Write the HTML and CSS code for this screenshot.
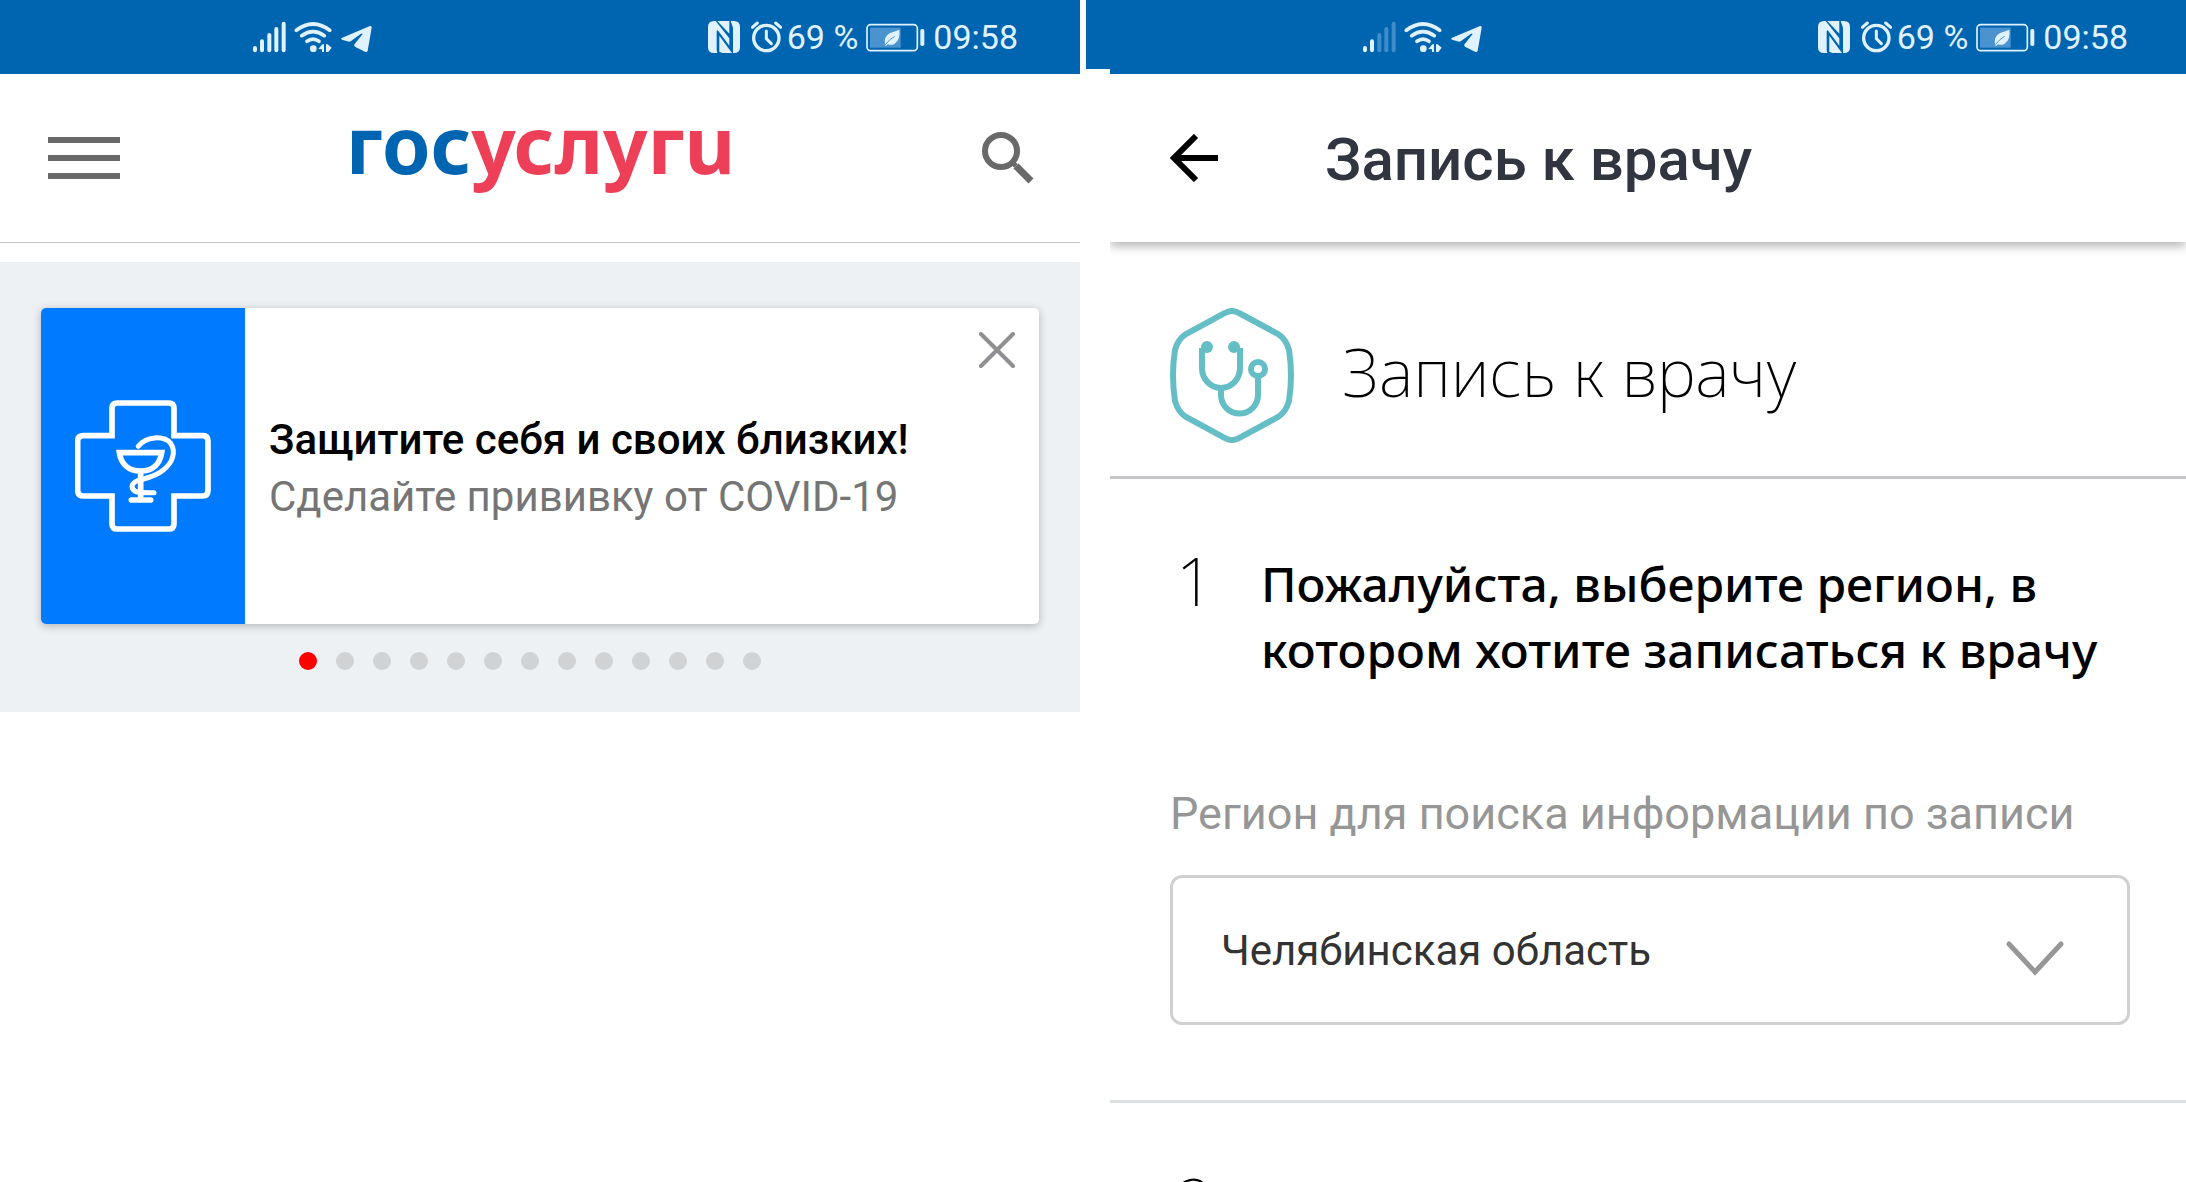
FILE: index.html
```html
<!DOCTYPE html>
<html lang="ru">
<head>
    <meta charset="UTF-8">
    <meta name="viewport" content="width=device-width, initial-scale=1.0">
    <title>Госуслуги - Запись к врачу</title>
    <link rel="stylesheet" href="styles.css">
</head>
<body>
    <!-- shared status bar icons -->
    <svg class="sprite" aria-hidden="true">
        <symbol id="wifi" viewBox="191 60 117 96">
            <g fill="none" stroke="currentColor" stroke-width="11" stroke-linecap="round">
                <path d="M198 88 Q248 50 298 88"/>
                <path d="M214 104 Q248 80 282 104"/>
                <path d="M230 121 Q248 108 266 121"/>
            </g>
            <circle cx="249" cy="143" r="10" fill="currentColor"/>
            <path d="M264 144 L276 130 H281 V153 H275 V145 Z M287 130 H292 L304 140 L294 153 H287 Z" fill="currentColor"/>
        </symbol>
        <symbol id="plane" viewBox="330 60 99 96">
            <path d="M335 111 L420 75 Q426 74 425 80 L413 149 Q411 155 405 152 L375 137 Q370 134 374 129 L398 99 Q396 96 392 99 L362 121 Q357 123 352 121 L336 116 Q331 113 335 111 Z" fill="currentColor"/>
        </symbol>
        <symbol id="nfc" viewBox="54 60 96 96">
            <path d="M72 60 H77 L118 112 V134 L85 90 Q80 84 80 92 V148 L82 156 H72 Q54 156 54 138 V78 Q54 60 72 60 Z" fill="currentColor"/>
            <path d="M88 104 V152 L98 156 H126 Z" fill="currentColor"/>
            <path d="M82 60 H118 V98 Z" fill="currentColor"/>
            <path d="M122 60 H132 Q150 60 150 78 V138 Q150 156 132 156 H129 V80 Z" fill="currentColor"/>
        </symbol>
        <symbol id="alarm" viewBox="182 60 93 96">
            <circle cx="228" cy="111" r="38" fill="none" stroke="currentColor" stroke-width="10"/>
            <path d="M228 90 V113 L243 128 M186 79 L201 66 M271 79 L256 66" fill="none" stroke="currentColor" stroke-width="9" stroke-linecap="round"/>
        </symbol>
        <symbol id="battery" viewBox="530 60 177 96">
            <rect x="533" y="71" width="151" height="78" rx="11" fill="none" stroke="currentColor" stroke-width="5"/>
            <rect x="542" y="80" width="92" height="60" fill="#4b93cf"/>
            <rect x="693" y="84" width="12" height="51" rx="5" fill="currentColor"/>
            <path d="M587 132 Q583 105 602 96 Q616 92 630 86 Q634 116 616 128 Q606 134 596 130 L590 135 Z" fill="currentColor"/>
            <path d="M588 131 Q602 113 616 106" fill="none" stroke="#4b93cf" stroke-width="3"/>
        </symbol>
    </svg>

    <div class="page">
        <section class="screen">
            <div class="status-bar">
                <svg class="signal" viewBox="65 60 105 96">
                    <path d="M74 141 V148 M95 121 V148 M117 102 V148 M138 84 V148 M160 68 V148"/>
                </svg>
                <svg class="wifi"><use href="#wifi"/></svg>
                <svg class="plane"><use href="#plane"/></svg>
                <div class="status-right">
                    <svg class="nfc"><use href="#nfc"/></svg>
                    <svg class="alarm"><use href="#alarm"/></svg>
                    <span>69 %</span>
                    <svg class="battery"><use href="#battery"/></svg>
                    <span>09:58</span>
                </div>
            </div>

            <header class="main-header">
                <button class="icon-button" aria-label="Меню">
                    <svg width="72" height="42" viewBox="0 0 72 42">
                        <path d="M0 3 H72 M0 21 H72 M0 39 H72" stroke="#696969" stroke-width="6"/>
                    </svg>
                </button>
                <!-- the wordmark ends with a u-shaped letter -->
                <a class="logo" href="#" aria-label="госуслуги"><span class="logo-blue">гос</span>услугu</a>
                <button class="icon-button" aria-label="Поиск">
                    <svg width="54" height="54" viewBox="0 0 54 54" fill="none" stroke="#696969">
                        <circle cx="20" cy="20" r="16" stroke-width="6"/>
                        <path d="M31 31 L35 35" stroke-width="5"/>
                        <path d="M35 35 L50 50" stroke-width="7"/>
                    </svg>
                </button>
            </header>

            <div class="banner-area">
                <article class="banner">
                    <div class="banner-icon">
                        <svg width="136" height="132" viewBox="105 60 408 396" fill="none" stroke="#fff" stroke-width="17" stroke-linecap="round">
                            <path d="M232 69 H386 Q402 69 402 85 V167 H488 Q504 167 504 183 V331 Q504 348 488 348 H402 V431 Q402 447 386 447 H232 Q216 447 216 431 V348 H130 Q113 348 113 331 V183 Q113 167 130 167 H216 V85 Q216 69 232 69 Z"/>
                            <path d="M238 218 H365 C360 252 338 273 302 273 S243 252 238 218 Z"/>
                            <path d="M302 275 V355 M274 360 H332"/>
                            <path d="M295 199 C318 168 372 166 392 190 C409 216 398 248 370 270 C345 290 325 293 302 299 C274 306 270 322 284 333 C294 339 312 338 342 338" stroke-width="15"/>
                        </svg>
                    </div>
                    <div class="banner-text">
                        <h2>Защитите себя и своих близких!</h2>
                        <p>Сделайте прививку от COVID-19</p>
                    </div>
                    <button class="banner-close" aria-label="Закрыть">
                        <svg width="36" height="36" viewBox="0 0 36 36">
                            <path d="M2 2 L34 34 M34 2 L2 34" stroke="#8e8e93" stroke-width="4" stroke-linecap="round"/>
                        </svg>
                    </button>
                </article>
                <ul class="dots">
                    <li class="active"></li>
                    <li></li>
                    <li></li>
                    <li></li>
                    <li></li>
                    <li></li>
                    <li></li>
                    <li></li>
                    <li></li>
                    <li></li>
                    <li></li>
                    <li></li>
                    <li></li>
                </ul>
            </div>
        </section>

        <section class="screen screen-doctor">
            <div class="status-bar">
                <svg class="signal" viewBox="65 60 105 96">
                    <path d="M74 141 V148 M95 121 V148"/>
                    <path class="weak" d="M117 102 V148 M138 84 V148 M160 68 V148"/>
                </svg>
                <svg class="wifi"><use href="#wifi"/></svg>
                <svg class="plane"><use href="#plane"/></svg>
                <div class="status-right">
                    <svg class="nfc"><use href="#nfc"/></svg>
                    <svg class="alarm"><use href="#alarm"/></svg>
                    <span>69 %</span>
                    <svg class="battery"><use href="#battery"/></svg>
                    <span>09:58</span>
                </div>
            </div>

            <header class="doctor-header">
                <button class="icon-button" aria-label="Назад">
                    <svg width="48" height="48" viewBox="0 0 48 48">
                        <path d="M48 24 H5 M26 2 L4 24 L26 46" fill="none" stroke="#000" stroke-width="6"/>
                    </svg>
                </button>
                <h1>Запись к врачу</h1>
            </header>

            <div class="service">
                <svg width="124" height="135" viewBox="0 0 124 135" fill="none" stroke="#65bdc6" stroke-width="6">
                    <path d="M69 5 L108 26 Q116 31 119 42 Q123 67 119 93 Q116 104 108 109 L69 130 Q62 134 55 130 L16 109 Q8 104 5 93 Q1 67 5 42 Q8 31 16 26 L55 5 Q62 1 69 5 Z"/>
                    <path d="M32 40 V60 A19 20 0 0 0 70 60 V40 M51 80 V87 A18 18 0 0 0 88 87 V70"/>
                    <circle cx="88" cy="61" r="7"/>
                    <circle cx="37" cy="39" r="6" fill="#65bdc6" stroke="none"/>
                    <circle cx="64" cy="39" r="6" fill="#65bdc6" stroke="none"/>
                </svg>
                <h2>Запись к врачу</h2>
            </div>

            <div class="step">
                <div class="step-head">
                    <span class="step-number">1</span>
                    <h3>Пожалуйста, выберите регион, в котором хотите записаться к врачу</h3>
                </div>
                <label for="region">Регион для поиска информации по записи</label>
                <div class="select-box">
                    <select id="region">
                        <option>Челябинская область</option>
                    </select>
                    <svg width="58" height="36" viewBox="0 0 58 36">
                        <path d="M3 3 L29 31 L55 3" fill="none" stroke="#979797" stroke-width="5" stroke-linecap="round"/>
                    </svg>
                </div>
            </div>

            <div class="step step-next">
                <span class="step-number">2</span>
            </div>
        </section>
    </div>
</body>
</html>
```

FILE: styles.css
```css
* {
    box-sizing: border-box;
}

body {
    margin: 0;
    background-color: #fff;
    font-family: Roboto, "Liberation Sans", sans-serif;
    color: #000;
}

h1, h2, h3, p, ul {
    margin: 0;
    padding: 0;
}

svg {
    display: block;
    flex: none;
}

.sprite {
    position: absolute;
    width: 0;
    height: 0;
}

.page {
    display: grid;
    grid-template-columns: 1080fr 1076fr;
    column-gap: 30px;
    height: 100vh;
    overflow: hidden;
}

.screen {
    min-width: 0;
}

/* status bar */

.status-bar {
    position: relative;
    display: flex;
    align-items: center;
    gap: 7px;
    height: 74px;
    padding: 0 62px 0 252px;
    background-color: #0065b1;
    color: #e0f2ff;
    font-size: 34px;
}

.screen-doctor .status-bar {
    padding-right: 58px;
}

/* strip that sticks out to the left of the second screen */
.screen-doctor .status-bar::before {
    content: "";
    position: absolute;
    top: 0;
    left: -24px;
    width: 24px;
    height: 69px;
    background-color: #0065b1;
}

.status-right {
    display: flex;
    align-items: center;
    margin-left: auto;
}

.signal {
    width: 35px;
    height: 32px;
    fill: none;
    stroke: #e0f2ff;
    stroke-width: 12;
    stroke-linecap: round;
}

.signal .weak {
    stroke: #3f8cc8;
}

.wifi {
    width: 39px;
    height: 32px;
}

.plane {
    width: 33px;
    height: 32px;
}

.nfc {
    width: 32px;
    height: 32px;
}

.alarm {
    width: 31px;
    height: 32px;
    margin: 0 5px 0 11px;
}

.battery {
    width: 59px;
    height: 32px;
    margin: 0 8px;
}

/* headers */

.icon-button {
    display: block;
    padding: 0;
    border: none;
    background: none;
    cursor: pointer;
}

.main-header {
    display: flex;
    align-items: center;
    justify-content: space-between;
    height: 169px;
    padding: 0 45px 0 48px;
    border-bottom: 1px solid #c8c8c8;
}

.logo {
    color: #ee3f58;
    font-family: "Noto Sans", sans-serif;
    font-size: 78px;
    font-weight: 700;
    line-height: 84px;
    text-decoration: none;
    padding: 0 20px 28px 0;
}

.logo-blue {
    color: #0065b1;
}

.doctor-header {
    display: flex;
    align-items: center;
    gap: 107px;
    height: 168px;
    padding: 0 60px;
    box-shadow: 0 4px 10px rgba(0, 0, 0, 0.3);
    clip-path: inset(0 0 -16px 0);
}

.doctor-header h1 {
    padding-top: 4px;
    color: #31353f;
    font-size: 60px;
    font-weight: 500;
    line-height: 70px;
}

/* banner */

.banner-area {
    margin-top: 19px;
    padding: 46px 41px 42px;
    background-color: #edf1f4;
}

.banner {
    position: relative;
    display: flex;
    height: 316px;
    border-radius: 5px;
    background-color: #fff;
    box-shadow: 0 2px 8px rgba(0, 0, 0, 0.25);
    overflow: hidden;
}

.banner-icon {
    display: flex;
    align-items: center;
    justify-content: center;
    width: 204px;
    background-color: #007aff;
}

.banner-text {
    padding: 103px 24px 0;
    font-size: 42px;
    line-height: 57px;
}

.banner-text h2 {
    font-size: 42px;
    font-weight: 500;
}

.banner-text p {
    color: #757575;
}

.banner-close {
    position: absolute;
    top: 24px;
    right: 24px;
    padding: 0;
    border: none;
    background: none;
    cursor: pointer;
}

.dots {
    display: flex;
    justify-content: center;
    gap: 19px;
    margin-top: 28px;
    padding-right: 20px;
    list-style: none;
}

.dots li {
    width: 18px;
    height: 18px;
    border-radius: 50%;
    background-color: #d0d2d4;
}

.dots .active {
    background-color: #f00;
}

/* doctor appointment */

.service {
    display: flex;
    align-items: center;
    gap: 48px;
    height: 237px;
    padding: 32px 60px 0;
    border-bottom: 3px solid #c6c6ca;
}

.service h2 {
    padding-bottom: 8px;
    font-family: "Noto Sans", sans-serif;
    font-size: 66px;
    font-weight: 200;
    line-height: 80px;
}

.step {
    padding: 72px 48px 75px 60px;
    border-bottom: 3px solid #dce0e2;
}

.step-head {
    display: flex;
    align-items: flex-start;
}

.step-number {
    width: 91px;
    padding-left: 6px;
    font-family: "Noto Sans", sans-serif;
    font-size: 66px;
    font-weight: 200;
    line-height: 58px;
}

.step-head h3 {
    flex: 1;
    font-family: "Noto Sans", sans-serif;
    font-size: 48px;
    font-weight: 500;
    line-height: 66px;
}

.step label {
    display: block;
    margin-top: 101px;
    color: #969696;
    font-size: 45px;
    line-height: 60px;
}

.select-box {
    position: relative;
    margin-top: 31px;
    margin-right: 8px;
}

.select-box select {
    display: block;
    width: 100%;
    height: 150px;
    padding: 0 120px 0 48px;
    border: 3px solid #cfd1d1;
    border-radius: 12px;
    appearance: none;
    background-color: #fff;
    color: #333;
    font-family: inherit;
    font-size: 42px;
}

.select-box svg {
    position: absolute;
    top: 66px;
    right: 66px;
    pointer-events: none;
}

/* the second step starts right at the bottom of the window */
.step-next {
    padding-top: 69px;
    border-bottom: none;
}
```
